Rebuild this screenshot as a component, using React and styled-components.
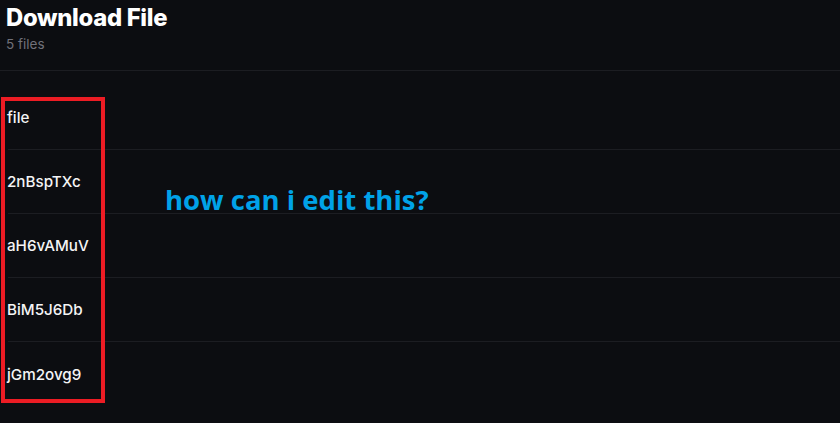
import React from 'react';
import styled, { createGlobalStyle } from 'styled-components';

const GlobalStyle = createGlobalStyle`
  html, body {
    margin: 0;
    padding: 0;
    background: #0c0d11;
  }
  body {
    font-family: Inter, "Noto Sans", sans-serif;
    color: #f4f4f5;
  }
  * {
    box-sizing: border-box;
  }
`;

const Page = styled.div`
  position: relative;
  width: 840px;
  height: 423px;
  overflow: hidden;
  background: #0c0d11;
`;

const Header = styled.div`
  padding: 3px 0 18px 6px;
  border-bottom: 1px solid #1c1d22;
`;

const Title = styled.h1`
  margin: 0;
  font-size: 23.8px;
  line-height: 30px;
  font-weight: 800;
  letter-spacing: -0.3px;
  color: #ffffff;
`;

const Subtitle = styled.div`
  margin-top: 3px;
  font-size: 13.5px;
  line-height: 16px;
  color: #71717a;
`;

const FileList = styled.div`
  margin-top: 15px;
  display: flex;
  flex-direction: column;
`;

const FileRow = styled.div`
  height: 64px;
  display: flex;
  align-items: center;
  margin-left: 8px;
  border-bottom: ${props => (props.last ? 'none' : '1px solid #1c1d22')};
`;

const FileName = styled.span`
  margin-left: -1px;
  font-size: 15.2px;
  font-weight: 500;
  color: #f4f4f5;
`;

const Highlight = styled.div`
  position: absolute;
  left: 1px;
  top: 97px;
  width: 104px;
  height: 306px;
  border: 4px solid #ed1c24;
  pointer-events: none;
`;

const Note = styled.div`
  position: absolute;
  left: 165px;
  top: 181px;
  font-family: "Open Sans", "Noto Sans", sans-serif;
  font-size: 27.5px;
  font-weight: 700;
  color: #00a2e8;
`;

const files = ['file', '2nBspTXc', 'aH6vAMuV', 'BiM5J6Db', 'jGm2ovg9'];

const App = () => {
  return (
    <>
      <GlobalStyle />
      <Page>
        <Header>
          <Title>Download File</Title>
          <Subtitle>{files.length} files</Subtitle>
        </Header>
        <FileList>
          {files.map((name, i) => (
            <FileRow key={name} last={i === files.length - 1}>
              <FileName>{name}</FileName>
            </FileRow>
          ))}
        </FileList>
        <Highlight />
        <Note>how can i edit this?</Note>
      </Page>
    </>
  );
};

export default App;
